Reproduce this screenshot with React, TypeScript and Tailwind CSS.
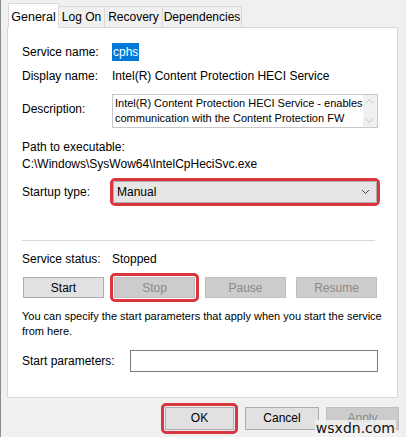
import React from "react";

const font = { fontFamily: '"Liberation Sans", Arial, sans-serif' };

const Outline: React.FC<{ className?: string; children: React.ReactNode }> = ({
  className = "",
  children,
}) => (
  <div className={`rounded-[5px] border-[3px] border-[#d9363e] ${className}`}>
    {children}
  </div>
);

const Btn: React.FC<{ label: string; disabled?: boolean; className?: string }> = ({
  label,
  disabled,
  className = "",
}) => (
  <div
    className={`flex items-center justify-center border text-[12px] ${
      disabled
        ? "bg-[#cccccc] border-[#bfbfbf] text-[#8a8a8a]"
        : "bg-[#e1e1e1] border-[#adadad] text-black"
    } ${className}`}
  >
    {label}
  </div>
);

export default function App() {
  const tabs = [
    { t: "Log On", w: "w-[46px]" },
    { t: "Recovery", w: "w-[58px]" },
    { t: "Dependencies", w: "w-[79px]" },
  ];

  return (
    <div
      className="relative w-[406px] h-[437px] overflow-hidden bg-[#f0f0f0] border-l border-[#8c8c8c] text-[12px] text-black"
      style={font}
    >
      {/* tab strip */}
      <div className="flex items-end h-[27px] pl-[7px]">
        <div className="relative z-10 -mb-px flex h-[25px] w-[51px] items-start justify-center border border-b-0 border-[#d9d9d9] bg-white pt-[4px] text-[12.5px]">
          General
        </div>
        {tabs.map((t) => (
          <div
            key={t.t}
            className={`flex h-[21px] items-center justify-center border border-b-0 border-l-0 border-[#d9d9d9] bg-[#f0f0f0] text-[12px] ${t.w}`}
          >
            {t.t}
          </div>
        ))}
      </div>

      {/* page */}
      <div className="ml-[6px] flex h-[371px] w-[391px] flex-col border border-[#d9d9d9] bg-white pl-[14px]">
        <div className="mt-[15px] flex h-[18px] items-center">
          <span className="w-[90px]">Service name:</span>
          <span className="bg-[#0078d7] px-[1px] text-white">cphs</span>
        </div>
        <div className="mt-[6px] flex h-[18px] items-center">
          <span className="w-[90px]">Display name:</span>
          <span>Intel(R) Content Protection HECI Service</span>
        </div>
        <div className="mt-[9px] flex h-[34px] items-start">
          <span className="w-[90px] pt-[6px]">Description:</span>
          <div className="flex h-[34px] w-[266px] border border-[#c8c8c8]">
            <div className="flex-1 whitespace-nowrap pl-[2px] pt-[1px] text-[11px] leading-[15px]">
              Intel(R) Content Protection HECI Service - enables
              <br />
              communication with the Content Protection FW
            </div>
            <div className="flex w-[15px] flex-col items-center justify-between bg-[#f0f0f0] py-[3px]">
              <svg width="9" height="6" viewBox="0 0 9 6">
                <path d="M1 5 L4.5 1.5 L8 5" fill="none" stroke="#c2c2c2" strokeWidth="1" />
              </svg>
              <svg width="9" height="6" viewBox="0 0 9 6">
                <path d="M1 1 L4.5 4.5 L8 1" fill="none" stroke="#c2c2c2" strokeWidth="1" />
              </svg>
            </div>
          </div>
        </div>
        <div className="mt-[11px] flex h-[16px] items-center">Path to executable:</div>
        <div className="mt-px flex h-[16px] items-center">C:\Windows\SysWow64\IntelCpHeciSvc.exe</div>

        <div className="mt-[6px] flex h-[28px] items-center">
          <span className="w-[88px]">Startup type:</span>
          <Outline className="h-[28px] w-[270px]">
            <div className="flex h-full items-center justify-between border border-[#adadad] bg-[#e5e5e5] pl-[3px] pr-[6px]">
              <span>Manual</span>
              <svg width="9" height="6" viewBox="0 0 9 6">
                <path d="M1 1 L4.5 4.5 L8 1" fill="none" stroke="#444" strokeWidth="1" />
              </svg>
            </div>
          </Outline>
        </div>

        <div className="mt-[34px] h-px w-[353px] bg-[#d8d8d8]" />

        <div className="mt-[10px] flex h-[16px] items-center">
          <span className="w-[90px]">Service status:</span>
          <span>Stopped</span>
        </div>

        <div className="mt-[10px] grid h-[21px] w-[355px] grid-cols-4 gap-[10px] pl-px">
          <Btn label="Start" />
          <div className="relative">
            <Btn label="Stop" disabled className="h-full" />
            <div className="absolute -inset-[4px] rounded-[5px] border-[3px] border-[#d9363e]" />
          </div>
          <Btn label="Pause" disabled />
          <Btn label="Resume" disabled />
        </div>

        <div className="mt-[11px] whitespace-nowrap text-[11px] leading-[15px]">
          You can specify the start parameters that apply when you start the service
          <br />
          from here.
        </div>

        <div className="mt-[11px] flex h-[22px] items-center">
          <span className="w-[108px]">Start parameters:</span>
          <div className="h-[22px] w-[248px] border border-[#7a7a7a] bg-white" />
        </div>
      </div>

      {/* footer */}
      <div className="mt-[8px] flex h-[24px] items-center">
        <div className="relative ml-[164px] h-[23px] w-[69px]">
          <Btn label="OK" className="h-full border-[#0078d7]" />
          <div className="absolute -inset-[4px] rounded-[5px] border-[3px] border-[#d9363e]" />
        </div>
        <Btn label="Cancel" className="ml-[11px] h-[23px] w-[74px]" />
        <Btn label="Apply" disabled className="ml-[7px] h-[23px] w-[73px]" />
      </div>

      <div
        className="absolute bottom-[1px] right-[10px] bg-[#f4f4f4]/80 px-px text-[14px] leading-[16px] text-[#111]"
        style={{ fontFamily: '"DejaVu Sans", sans-serif' }}
      >
        wsxdn.com
      </div>
    </div>
  );
}
